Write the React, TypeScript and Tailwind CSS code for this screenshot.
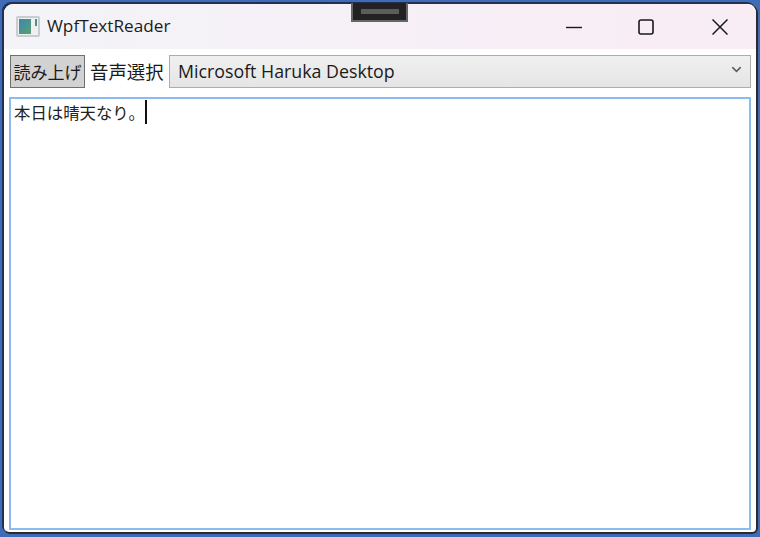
import { ChevronDown } from "lucide-react";

const jpFont = "font-['Noto_Sans_CJK_JP','Noto_Sans',sans-serif]";

function AppIcon() {
  return (
    <div className="flex h-[21px] w-[24px] rounded-[2px] border-2 border-[#c6ced2] bg-[#eef1ee] p-[1px]">
      <div className="h-full w-[12px] bg-gradient-to-br from-[#3f85b0] to-[#5aa070]" />
      <div className="ml-[1px] flex h-full flex-1 flex-col">
        <div className="h-[7px] w-[2px] self-end bg-[#4a8f98]" />
      </div>
    </div>
  );
}

function TitleBar() {
  return (
    <div className="relative flex h-[45px] shrink-0 items-center rounded-t-[9px] bg-gradient-to-r from-[#f3f3f8] to-[#f9ecf5] pl-[12px]">
      <AppIcon />
      <span className="mb-[2px] ml-[7px] font-['Open_Sans',sans-serif] text-[17.2px] text-[#1c1c1c]">WpfTextReader</span>
      <div className="ml-auto flex items-center text-[#1a1a1a]">
        <svg width="16" height="16" viewBox="0 0 16 16" className="mr-[56px]">
          <path d="M0 8.5h16" stroke="currentColor" strokeWidth="1.4" />
        </svg>
        <svg width="16" height="16" viewBox="0 0 16 16" className="mr-[58px]">
          <rect x="1" y="1" width="14" height="14" rx="2" fill="none" stroke="currentColor" strokeWidth="1.6" />
        </svg>
        <svg width="16" height="16" viewBox="0 0 16 16" className="mr-[28px]">
          <path d="M0.5 0.5l15 15M15.5 0.5l-15 15" stroke="currentColor" strokeWidth="1.5" />
        </svg>
      </div>
      {/* snap bar sitting over the title bar */}
      <div className="absolute left-[347px] top-[-1px] flex h-[19px] w-[57px] items-center justify-center border-2 border-t-0 border-[#666] bg-[#222]">
        <div className="h-[5px] w-[38px] bg-[#5c5c5c]" />
      </div>
    </div>
  );
}

function Toolbar() {
  return (
    <div className="flex h-[48px] shrink-0 items-start pl-[6px] pr-[5px] pt-[6px]">
      <button className={`flex h-[33px] w-[75px] items-center justify-center whitespace-nowrap border border-[#707070] bg-[#d2d2d2] text-[17px] text-[#1a1a1a] ${jpFont}`}>
        読み上げ
      </button>
      <span className={`ml-[5px] flex h-[33px] w-[79px] items-center whitespace-nowrap text-[18.4px] text-[#1a1a1a] ${jpFont}`}>音声選択</span>
      <div className="flex h-[33px] flex-1 items-center border border-[#acacac] bg-gradient-to-b from-[#f0f0f0] to-[#e5e5e5] pl-[8px] pr-[6px]">
        <span className="font-['Open_Sans',sans-serif] text-[17.8px] text-[#1a1a1a]">Microsoft Haruka Desktop</span>
        <ChevronDown className="mb-[4px] ml-auto h-[15px] w-[15px] text-[#606060]" strokeWidth={2.5} />
      </div>
    </div>
  );
}

export default function App() {
  return (
    <div className="h-[537px] w-[760px] overflow-hidden bg-[#3f6cb8] pb-[3px] pl-[4px] pr-[2px] pt-[4px]">
      <div className="flex h-full flex-col rounded-t-[9px] rounded-b-[6px] border-r-2 border-b-2 border-[#2a2a30] bg-white shadow-[-2px_-2px_0_#23304f]">
        <TitleBar />
        <Toolbar />
        <div className="mx-[5px] mb-[2px] flex-1 border-2 border-[#8dbbee] bg-white pl-[3px]">
          <div className="flex h-[26px] items-center">
            <span className={`text-[16.4px] text-[#222] ${jpFont}`}>本日は晴天なり。</span>
            <span className="h-[24px] w-[2px] bg-[#111]" />
          </div>
        </div>
      </div>
    </div>
  );
}
